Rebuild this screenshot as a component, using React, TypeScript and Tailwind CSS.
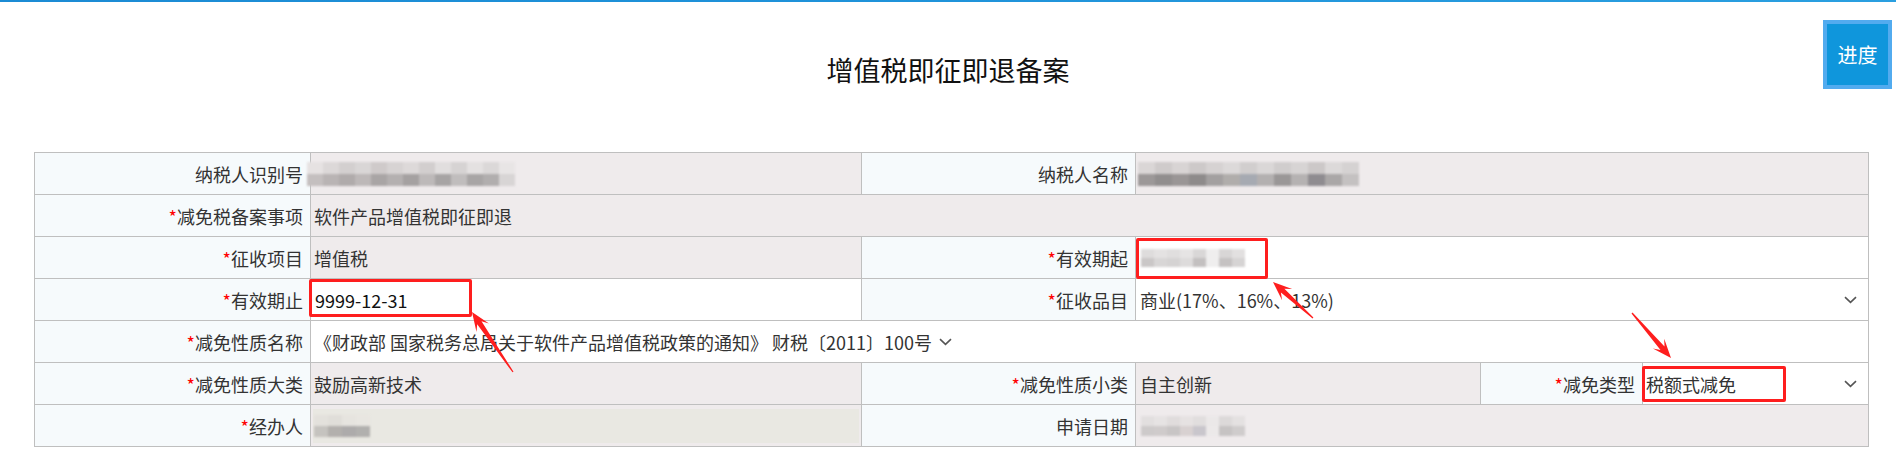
import React from 'react';

const FONT = { fontFamily: '"Microsoft YaHei", "Noto Sans CJK SC", "Noto Sans", sans-serif' };

type Blocks = { top: string[]; bottom: string[] };

const Mosaic: React.FC<{ b: Blocks; cell: number; h: number; className?: string }> = ({ b, cell, h, className }) => (
  <div className={`flex flex-col blur-[1px] ${className || ''}`}>
    <div className="flex">
      {b.top.map((c, i) => <div key={i} style={{ background: c, width: cell, height: h }} />)}
    </div>
    <div className="flex">
      {b.bottom.map((c, i) => <div key={i} style={{ background: c, width: cell, height: h }} />)}
    </div>
  </div>
);

const idBlocks: Blocks = {
  top: ['#e6e2e2', '#dcd8d8', '#d3cfcf', '#d9d6d6', '#cfcaca', '#d7d3d3', '#ddd9d9', '#d2cece', '#e1dede', '#d6d3d3', '#e4e1e1', '#dbd8d8', '#e8e5e5'],
  bottom: ['#c4bfbf', '#b9b4b4', '#b0abab', '#bdb8b8', '#a9a5a5', '#b4b0b0', '#a5a1a1', '#bdb9b9', '#a7a4a4', '#c0bdbd', '#a8a5a5', '#b1aeae', '#d8d5d5'],
};
const nameBlocks: Blocks = {
  top: ['#dad6d6', '#cfcbcb', '#d8d4d4', '#cdc9c9', '#d6d2d2', '#dcd9d9', '#d1cece', '#dad7d7', '#d0cdcd', '#d7d4d4', '#ccc8c8', '#dcd9d9', '#d5d2d2'],
  bottom: ['#9c9898', '#918e8e', '#9a9696', '#8e8b8b', '#a3a0a0', '#b0adab', '#a6aab2', '#b3b0b0', '#9a9797', '#b5b2b2', '#8f8c90', '#aaa7a7', '#c4c1c1'],
};
const dateBlocks: Blocks = {
  top: ['#dedcdc', '#e4e2e2', '#e0dede', '#e6e4e4', '#d9d7d7', '#efeeee', '#d8d6d6', '#e2e0e0'],
  bottom: ['#cac7c7', '#d8d6d6', '#d5d3d3', '#dddbdb', '#c3c0c0', '#efeeee', '#c5c2c2', '#d6d4d4'],
};
const applyBlocks: Blocks = {
  top: ['#e2dfdf', '#e6e3e3', '#e0dcdc', '#e6e2e2', '#e1dede', '#ebe8e8', '#dcd9d9', '#e4e1e1'],
  bottom: ['#cdcaca', '#cfcbcb', '#c8c5c5', '#d8d1d1', '#c9c6cc', '#ece9e9', '#c6c3c3', '#cfcccc'],
};
const agentBlocks: Blocks = {
  top: ['#e3e1dc', '#e0ded9', '#e6e4df', '#e8e6e1'],
  bottom: ['#c5c3bf', '#b3b0ad', '#adabab', '#b1b0ae'],
};

const Label: React.FC<{ text: string; req?: boolean }> = ({ text, req }) => (
  <td className="h-[42px] border border-[#bfbfbf] bg-[#f6fafc] pr-[7px] text-right align-middle whitespace-nowrap">
    {req && <span className="text-[#ff0000]">*</span>}
    {text}
  </td>
);

const Chevron: React.FC = () => (
  <svg width="13" height="8" viewBox="0 0 13 8" className="shrink-0">
    <path d="M1 1.2 L6.5 6.4 L12 1.2" fill="none" stroke="#555" strokeWidth="1.6" />
  </svg>
);

function arrow(tx: number, ty: number, hx: number, hy: number) {
  const len = Math.hypot(hx - tx, hy - ty);
  const dx = (hx - tx) / len;
  const dy = (hy - ty) / len;
  const nx = -dy;
  const ny = dx;
  const p = (d: number, w: number) => `${(hx - dx * d + nx * w).toFixed(1)},${(hy - dy * d + ny * w).toFixed(1)}`;
  return [
    p(len, 0.6),
    p(13, 2.6),
    p(19, 7.5),
    p(0, 0),
    p(19, -7.5),
    p(13, -2.6),
    p(len, -0.6),
  ].join(' ');
}

export default function App() {
  return (
    <div className="relative h-[463px] w-[1896px] overflow-hidden bg-white text-[18px] text-[#333]" style={FONT}>
      <div className="h-[2px] bg-gradient-to-r from-[#1b8bd4] via-[#1f93da] to-[#2a9fe0]" />

      <div className="flex h-[150px] justify-center pt-[50px]">
        <h1 className="text-[27px] leading-[36px] font-normal text-[#111]">增值税即征即退备案</h1>
      </div>

      <button className="absolute right-[4px] top-[20px] flex h-[69px] w-[69px] items-center justify-center border-[4px] border-[#52abef] bg-[#0f96dc] text-[20px] text-white">
        进度
      </button>

      <div className="pl-[34px] pr-[28px]">
        <table className="w-[1834px] table-fixed border-collapse leading-[24px]">
          <colgroup>
            <col className="w-[276px]" />
            <col className="w-[551px]" />
            <col className="w-[274px]" />
            <col className="w-[345px]" />
            <col className="w-[162px]" />
            <col className="w-[226px]" />
          </colgroup>
          <tbody>
            <tr>
              <Label text="纳税人识别号" />
              <td className="border border-[#bfbfbf] bg-[#efebec]">
                <Mosaic b={idBlocks} cell={16} h={12} className="-ml-[4px]" />
              </td>
              <Label text="纳税人名称" />
              <td colSpan={3} className="border border-[#bfbfbf] bg-[#efebec] pl-[2px]">
                <Mosaic b={nameBlocks} cell={17} h={12} />
              </td>
            </tr>
            <tr>
              <Label text="减免税备案事项" req />
              <td colSpan={5} className="border border-[#bfbfbf] bg-[#efebec] pl-[3px]">软件产品增值税即征即退</td>
            </tr>
            <tr>
              <Label text="征收项目" req />
              <td className="border border-[#bfbfbf] bg-[#efebec] pl-[3px]">增值税</td>
              <Label text="有效期起" req />
              <td colSpan={3} className="border border-[#bfbfbf] bg-white pl-[5px]">
                <Mosaic b={dateBlocks} cell={13} h={9} />
              </td>
            </tr>
            <tr>
              <Label text="有效期止" req />
              <td className="border border-[#bfbfbf] bg-white pl-[4px] text-[#111]">9999-12-31</td>
              <Label text="征收品目" req />
              <td colSpan={3} className="border border-[#bfbfbf] bg-white pl-[4px] pr-[11px]">
                <div className="flex items-center justify-between">
                  <span>商业(17%、16%、13%)</span>
                  <Chevron />
                </div>
              </td>
            </tr>
            <tr>
              <Label text="减免性质名称" req />
              <td colSpan={5} className="border border-[#bfbfbf] bg-white pl-[3px]">
                <div className="flex items-center gap-[7px]">
                  <span>《财政部 国家税务总局关于软件产品增值税政策的通知》 财税〔2011〕100号</span>
                  <Chevron />
                </div>
              </td>
            </tr>
            <tr>
              <Label text="减免性质大类" req />
              <td className="border border-[#bfbfbf] bg-[#efebec] pl-[3px]">鼓励高新技术</td>
              <Label text="减免性质小类" req />
              <td className="border border-[#bfbfbf] bg-[#efebec] pl-[4px]">自主创新</td>
              <Label text="减免类型" req />
              <td className="border border-[#bfbfbf] bg-white pl-[3px] pr-[11px]">
                <div className="flex items-center justify-between">
                  <span>税额式减免</span>
                  <Chevron />
                </div>
              </td>
            </tr>
            <tr>
              <Label text="经办人" req />
              <td className="border border-[#bfbfbf] bg-[#efebec] px-[2px] py-[3px]">
                <div className="flex h-[34px] items-center bg-[#e9e8e2] pl-[1px]">
                  <Mosaic b={agentBlocks} cell={14} h={11} />
                </div>
              </td>
              <Label text="申请日期" />
              <td colSpan={3} className="border border-[#bfbfbf] bg-[#efebec] pl-[5px]">
                <Mosaic b={applyBlocks} cell={13} h={10} />
              </td>
            </tr>
          </tbody>
        </table>
      </div>

      {/* red annotation boxes */}
      <div className="pointer-events-none absolute left-[309px] top-[279px] h-[38px] w-[163px] rounded-[2px] border-[3px] border-[#fe1e1e]" />
      <div className="pointer-events-none absolute left-[1136px] top-[238px] h-[41px] w-[132px] rounded-[2px] border-[3px] border-[#fe1e1e]" />
      <div className="pointer-events-none absolute left-[1642px] top-[366px] h-[36px] w-[144px] rounded-[2px] border-[3px] border-[#fe1e1e]" />

      {/* red annotation arrows */}
      <svg className="pointer-events-none absolute left-0 top-0" width="1896" height="463">
        <polygon points={arrow(513, 372, 472, 312)} fill="#fe1e1e" />
        <polygon points={arrow(1313, 318, 1273, 282)} fill="#fe1e1e" />
        <polygon points={arrow(1632, 313, 1671, 358)} fill="#fe1e1e" />
      </svg>
    </div>
  );
}
